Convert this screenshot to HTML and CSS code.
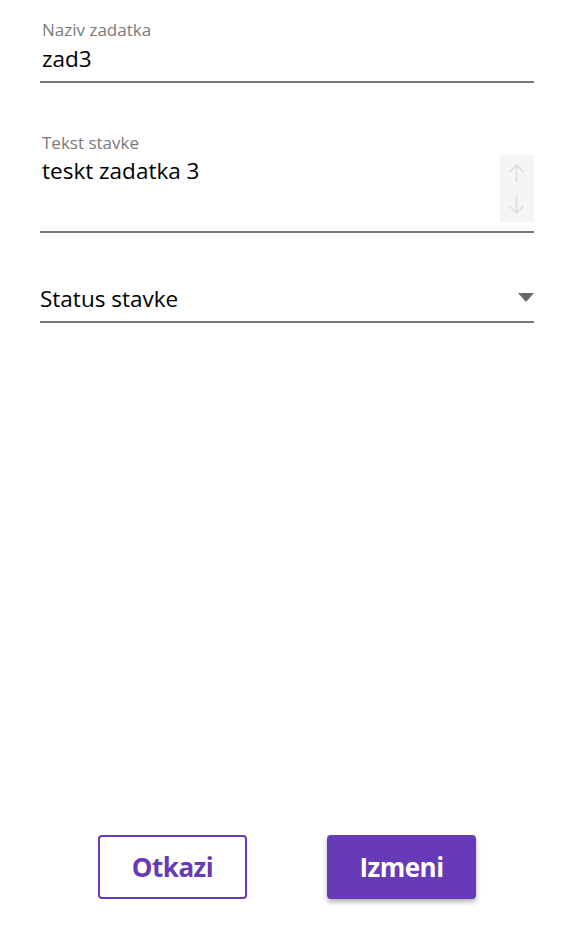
FILE: index.html
```html
<!DOCTYPE html>
<html>
<head>
<meta charset="utf-8">
<link rel="stylesheet" href="styles.css">
</head>
<body>
<div class="page">
  <form class="form">
    <div class="field f1">
      <div class="label">Naziv zadatka</div>
      <div class="value">zad3</div>
    </div>
    <div class="field f2">
      <div class="label">Tekst stavke</div>
      <div class="textarea-row">
        <div class="value">teskt zadatka 3</div>
        <div class="spinner">
          <svg width="34" height="33" viewBox="0 0 34 33"><path d="M16.5 27V10M9.5 17l7-7 7 7" fill="none" stroke="#dedede" stroke-width="1.6"/></svg>
          <svg width="34" height="34" viewBox="0 0 34 34"><path d="M16.5 8v17M9.5 18l7 7 7-7" fill="none" stroke="#dedede" stroke-width="1.6"/></svg>
        </div>
      </div>
    </div>
    <div class="field f3">
      <div class="value">Status stavke</div>
      <svg class="caret" width="16" height="9" viewBox="0 0 16 9"><path d="M0 0h16L8 9z" fill="#6b6b6b"/></svg>
    </div>
  </form>
  <div class="actions">
    <button class="btn outline" type="button">Otkazi</button>
    <button class="btn filled" type="button">Izmeni</button>
  </div>
</div>
</body>
</html>
```
FILE: styles.css
```css
html, body {
  margin: 0;
  padding: 0;
  background: #fff;
}
body {
  font-family: "Open Sans", "Noto Sans", sans-serif;
  color: #000;
}
.page {
  width: 570px;
  height: 936px;
  display: flex;
  flex-direction: column;
  justify-content: space-between;
  box-sizing: border-box;
  padding: 0 36px 37px 40px;
}
.form {
  display: flex;
  flex-direction: column;
}
.field {
  border-bottom: 2px solid #777;
  box-sizing: border-box;
}
.f1 {
  height: 83px;
  padding-top: 20px;
}
.f2 {
  margin-top: 50px;
  height: 100px;
}
.f3 {
  margin-top: 52px;
  height: 38px;
  display: flex;
  justify-content: space-between;
  align-items: flex-start;
}
.label {
  font-size: 17px;
  color: #7a7a7a;
  padding-left: 2px;
  line-height: 20px;
}
.value {
  font-size: 22.5px;
  line-height: 28px;
  padding-left: 2px;
  margin-top: 5px;
}
.f2 .value { margin-top: 4px; }
.f3 .value { margin-top: 0; padding-left: 0; }
.textarea-row {
  display: flex;
  justify-content: space-between;
  align-items: flex-start;
}
.spinner {
  margin-top: 2px;
  width: 34px;
  height: 67px;
  background: #f5f5f5;
  display: flex;
  flex-direction: column;
}
.spinner svg { display: block; }
.caret { margin-top: 8px; }
.actions {
  display: flex;
  justify-content: center;
  gap: 80px;
}
.btn {
  width: 149px;
  height: 64px;
  border-radius: 4px;
  font-family: "Open Sans", "Noto Sans", sans-serif;
  font-weight: 700;
  font-size: 26px;
  letter-spacing: -0.5px;
  box-sizing: border-box;
  cursor: pointer;
  padding: 0;
}
.outline {
  background: #fff;
  color: #673ab7;
  border: 2px solid #673ab7;
}
.filled {
  background: #673ab7;
  color: #fff;
  border: none;
  box-shadow: 0 3px 5px rgba(0,0,0,0.3);
}
```
